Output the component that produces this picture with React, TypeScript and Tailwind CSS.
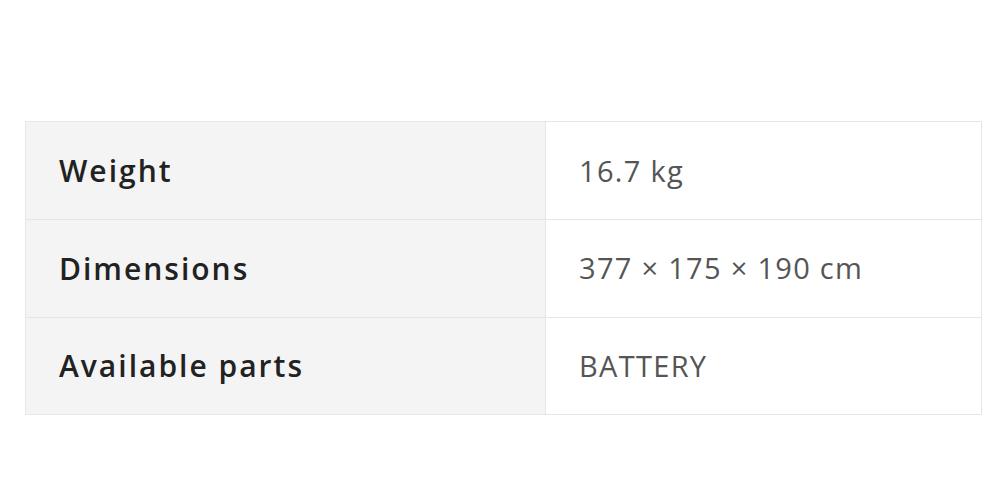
import React from 'react'

const rows = [
  { label: 'Weight', value: '16.7 kg' },
  { label: 'Dimensions', value: '377 × 175 × 190 cm' },
  { label: 'Available parts', value: 'BATTERY' },
]

export default function App() {
  return (
    <div className="w-[999px] h-[497px] bg-white pt-[121px] pl-[25px] font-['Open_Sans',sans-serif]">
      <table className="w-[957px] border-collapse border border-[#e6e6e6]">
        <tbody>
          {rows.map(r => (
            <tr key={r.label} className="h-[97.8px] border-b border-[#e6e6e6]">
              <th className="w-[520px] bg-[#f4f4f4] border-r border-[#e6e6e6] pl-[33px] text-left text-[30px] tracking-[2px] font-semibold text-[#222]">
                {r.label}
              </th>
              <td className="pl-[33px] text-left text-[29px] tracking-[1.3px] text-[#555]">{r.value}</td>
            </tr>
          ))}
        </tbody>
      </table>
    </div>
  )
}
